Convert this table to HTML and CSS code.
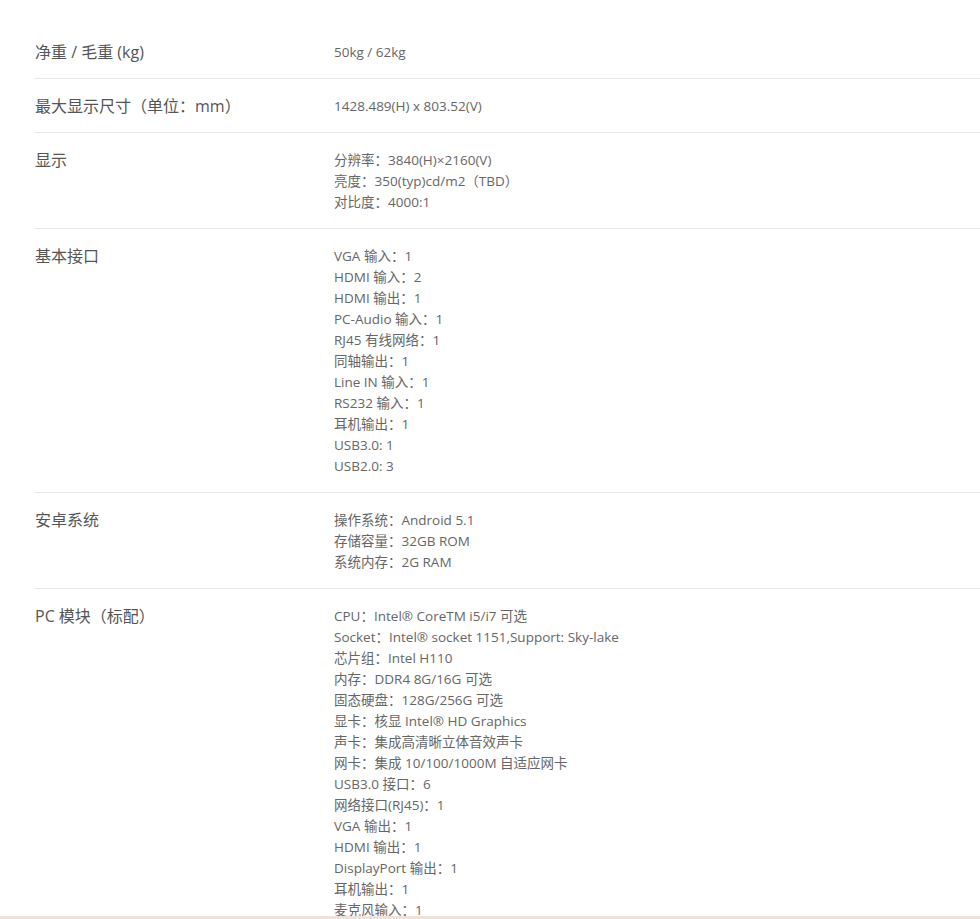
FILE: index.html
```html
<!DOCTYPE html>
<html lang="zh-CN">
<head>
<meta charset="utf-8">
<title>参数</title>
<link rel="stylesheet" href="styles.css">
</head>
<body>
<div class="specs">
  <div class="row">
    <div class="label">净重 / 毛重 (kg)</div>
    <div class="value"><p>50kg / 62kg</p></div>
  </div>
  <div class="row">
    <div class="label">最大显示尺寸（单位：mm）</div>
    <div class="value"><p>1428.489(H) x 803.52(V)</p></div>
  </div>
  <div class="row">
    <div class="label">显示</div>
    <div class="value">
      <p>分辨率：3840(H)×2160(V)</p>
      <p>亮度：350(typ)cd/m2（TBD）</p>
      <p>对比度：4000:1</p>
    </div>
  </div>
  <div class="row">
    <div class="label">基本接口</div>
    <div class="value">
      <p>VGA 输入：1</p>
      <p>HDMI 输入：2</p>
      <p>HDMI 输出：1</p>
      <p>PC-Audio 输入：1</p>
      <p>RJ45 有线网络：1</p>
      <p>同轴输出：1</p>
      <p>Line IN 输入：1</p>
      <p>RS232 输入：1</p>
      <p>耳机输出：1</p>
      <p>USB3.0: 1</p>
      <p>USB2.0: 3</p>
    </div>
  </div>
  <div class="row">
    <div class="label">安卓系统</div>
    <div class="value">
      <p>操作系统：Android 5.1</p>
      <p>存储容量：32GB ROM</p>
      <p>系统内存：2G RAM</p>
    </div>
  </div>
  <div class="row">
    <div class="label">PC 模块（标配）</div>
    <div class="value">
      <p>CPU：Intel® CoreTM i5/i7 可选</p>
      <p>Socket：Intel® socket 1151,Support: Sky-lake</p>
      <p>芯片组：Intel H110</p>
      <p>内存：DDR4 8G/16G 可选</p>
      <p>固态硬盘：128G/256G 可选</p>
      <p>显卡：核显 Intel® HD Graphics</p>
      <p>声卡：集成高清晰立体音效声卡</p>
      <p>网卡：集成 10/100/1000M 自适应网卡</p>
      <p>USB3.0 接口：6</p>
      <p>网络接口(RJ45)：1</p>
      <p>VGA 输出：1</p>
      <p>HDMI 输出：1</p>
      <p>DisplayPort 输出：1</p>
      <p>耳机输出：1</p>
      <p>麦克风输入：1</p>
    </div>
  </div>
</div>
<div class="bottom-bar"></div>
</body>
</html>
```

FILE: styles.css
```css
html, body {
  margin: 0;
  padding: 0;
  background: #fff;
}
body {
  font-family: "Open Sans", "Noto Sans CJK SC", sans-serif;
  overflow: hidden;
}
.specs {
  padding: 25px 0 0 35px;
}
.row {
  display: flex;
  padding: 17px 0 15px;
  border-bottom: 1px solid #e6e6e6;
}
.label {
  width: 299px;
  flex: none;
  font-size: 16px;
  line-height: 21px;
  color: #555;
}
.value {
  font-size: 13.5px;
  line-height: 21px;
  color: #666;
}
.value p {
  margin: 0;
}
.bottom-bar {
  position: fixed;
  left: 0;
  right: 0;
  bottom: 0;
  height: 3px;
  background: #efe3d8;
}
```
